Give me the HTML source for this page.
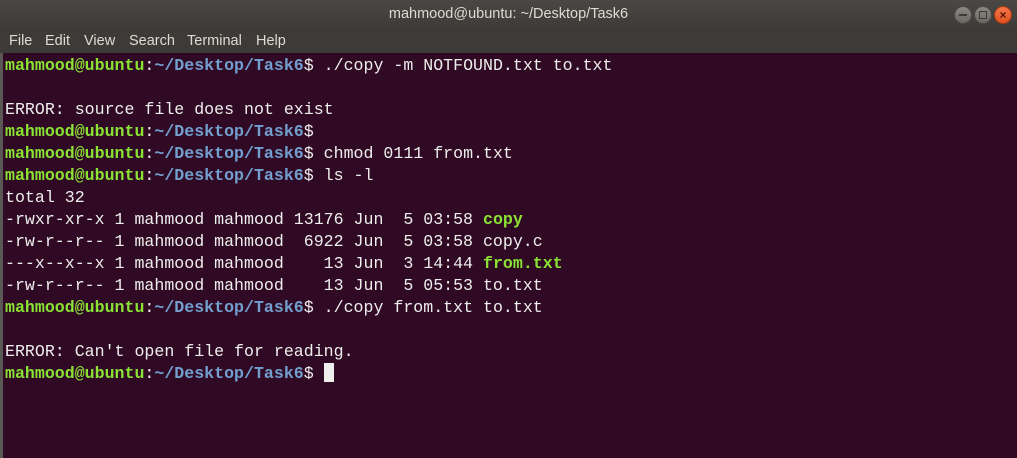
<!DOCTYPE html>
<html><head><meta charset="utf-8"><style>
*{margin:0;padding:0;box-sizing:border-box}
body{width:1017px;height:458px;overflow:hidden;background:#300a24;font-family:"Liberation Sans",sans-serif;position:relative}
.title{position:absolute;left:0;top:0;width:1017px;height:30px;background:linear-gradient(#4a4844,#3d3b37);color:#dfdbd2;font-size:14.5px;text-align:center;line-height:28px}
.menu{position:absolute;left:0;top:30px;width:1017px;height:23px;background:#3c3b37;color:#dfdbd2;font-size:14.5px;line-height:23px}
.menu span{position:absolute;top:0}
.btn{position:absolute;top:6px;width:18px;height:18px;border-radius:50%;background:linear-gradient(#8a8883,#6a6863);border:1px solid #4a4844}
.term{position:absolute;left:0;top:53px;width:1017px;height:405px;border-left:3px solid #5a5855}
pre{position:absolute;left:2px;top:2px;font-family:"Liberation Mono",monospace;font-size:16.6px;line-height:22px;color:#eeeeec}
.g{color:#8ae234;font-weight:bold}.b{color:#729fcf;font-weight:bold}
.cur{display:inline-block;width:10px;height:19px;background:#eeeeec;vertical-align:-4px}
</style></head><body>
<div class="title">mahmood@ubuntu: ~/Desktop/Task6</div>
<div class="btn" style="left:954px"><div style="position:absolute;left:4px;top:7px;width:8px;height:2px;background:#3c3b37"></div></div>
<div class="btn" style="left:974px"><div style="position:absolute;left:4px;top:4px;width:8px;height:8px;border:1px solid #3c3b37"></div></div>
<div class="btn" style="left:994px;background:linear-gradient(#f4774a,#e0511f);border-color:#a03a10;color:#5a1a05;font-size:12px;line-height:16px;text-align:center;font-weight:bold">×</div>
<div class="menu"><span style="left:9px">File</span><span style="left:45px">Edit</span><span style="left:84px">View</span><span style="left:129px">Search</span><span style="left:187px">Terminal</span><span style="left:256px">Help</span></div>
<div class="term"><pre><span class="g">mahmood@ubuntu</span>:<span class="b">~/Desktop/Task6</span>$ ./copy -m NOTFOUND.txt to.txt

ERROR: source file does not exist
<span class="g">mahmood@ubuntu</span>:<span class="b">~/Desktop/Task6</span>$
<span class="g">mahmood@ubuntu</span>:<span class="b">~/Desktop/Task6</span>$ chmod 0111 from.txt
<span class="g">mahmood@ubuntu</span>:<span class="b">~/Desktop/Task6</span>$ ls -l
total 32
-rwxr-xr-x 1 mahmood mahmood 13176 Jun  5 03:58 <span class="g">copy</span>
-rw-r--r-- 1 mahmood mahmood  6922 Jun  5 03:58 copy.c
---x--x--x 1 mahmood mahmood    13 Jun  3 14:44 <span class="g">from.txt</span>
-rw-r--r-- 1 mahmood mahmood    13 Jun  5 05:53 to.txt
<span class="g">mahmood@ubuntu</span>:<span class="b">~/Desktop/Task6</span>$ ./copy from.txt to.txt

ERROR: Can't open file for reading.
<span class="g">mahmood@ubuntu</span>:<span class="b">~/Desktop/Task6</span>$ <span class="cur"></span></pre></div>
</body></html>
